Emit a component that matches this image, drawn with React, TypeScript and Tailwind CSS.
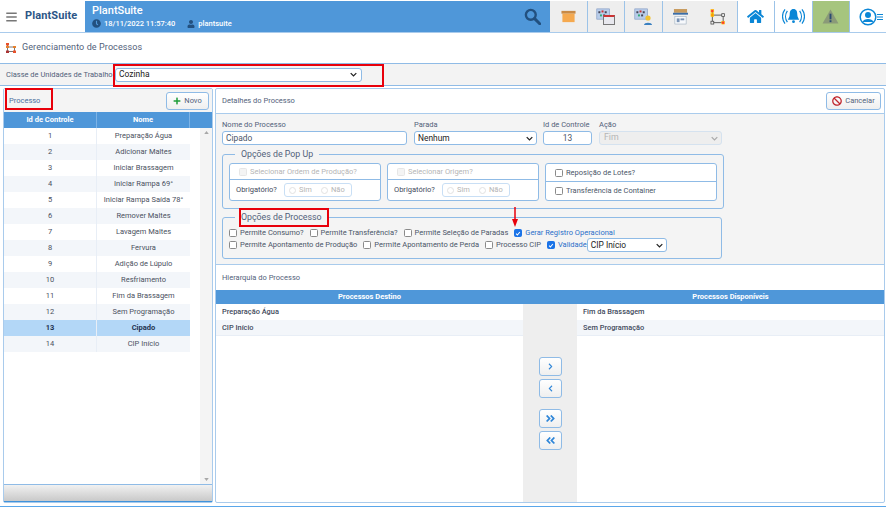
import React from "react";
import { FaHome, FaPlus, FaBan, FaChevronRight, FaChevronLeft, FaAngleDoubleRight, FaAngleDoubleLeft, FaBars, FaClock, FaUser } from "react-icons/fa";

const rows = ["Preparação Água","Adicionar Maltes","Iniciar Brassagem","Iniciar Rampa 69°","Iniciar Rampa Saída 78°","Remover Maltes","Lavagem Maltes","Fervura","Adição de Lúpulo","Resfriamento","Fim da Brassagem","Sem Programação","Cipado","CIP Início"];

const Chk = ({ on, dim }: { on?: boolean; dim?: boolean }) => (
  <span className={`inline-flex items-center justify-center w-[8px] h-[8px] rounded-[1.5px] border shrink-0 ${on ? "bg-[#1a73e8] border-[#1a73e8]" : dim ? "bg-[#f4f4f4] border-[#e6e6e6]" : "bg-white border-[#8a8a8a]"}`}>
    {on && <svg viewBox="0 0 8 8" className="w-[7px] h-[7px]"><path d="M1.5 4.2 3.2 6 6.5 2" fill="none" stroke="#fff" strokeWidth="1.4" /></svg>}
  </span>
);

const Caret = ({ c = "#222" }: { c?: string }) => (
  <svg viewBox="0 0 10 6" className="w-[7px] h-[5px] shrink-0"><path d="M1 1l4 4 4-4" fill="none" stroke={c} strokeWidth="1.8" /></svg>
);

const Sel = ({ w, text, cls = "" }: { w: string; text: string; cls?: string }) => (
  <div className={`${w} ${cls} h-[14px] bg-white border border-[#8fbbe6] rounded-[3px] flex items-center justify-between pl-[3px] pr-[3px] text-[8.4px] text-[#222]`}>
    <span>{text}</span><Caret />
  </div>
);

const Field = ({ w, label, children }: { w: string; label: string; children: React.ReactNode }) => (
  <div className={`${w} shrink-0 flex flex-col`}>
    <div className="h-[13px] text-[7.5px] leading-[13px] text-[#52617a] whitespace-nowrap">{label}</div>
    {children}
  </div>
);

const TopIcon = ({ children, bg = "bg-[#eeeeee]" }: { children: React.ReactNode; bg?: string }) => (
  <div className={`w-[37.5px] h-full ${bg} border-r border-[#9cc3e8] flex items-center justify-center shrink-0`}>{children}</div>
);

const Grid = () => (
  <svg viewBox="0 0 24 20" className="w-[19px] h-[16px]">
    <rect x="1" y="1" width="16" height="13" fill="#b9cdea" stroke="#7f98c0" strokeWidth=".8" />
    <rect x="3" y="4" width="2.5" height="2.5" fill="#445" /><rect x="7" y="3" width="2.5" height="2.5" fill="#c33" /><rect x="11" y="4" width="2.5" height="2.5" fill="#445" />
    <rect x="5" y="8" width="2.5" height="2.5" fill="#3a7" /><rect x="9" y="8" width="2.5" height="2.5" fill="#445" />
  </svg>
);

const PopBox = ({ label }: { label: string }) => (
  <div className="w-[152px] h-[38px] border border-[#8fbbe6] rounded-[3px] bg-white flex flex-col shrink-0">
    <div className="h-[16px] flex items-center pl-[9px] gap-[3px] border-b border-[#8fbbe6] text-[7.5px] text-[#b5b5b5]"><Chk dim /><span>{label}</span></div>
    <div className="flex-1 flex items-center pl-[6px] text-[7.5px] text-[#3f4a5c]">
      <span className="w-[48px]">Obrigatório?</span>
      <div className="w-[68px] h-[14px] border border-[#c9dff5] rounded-[3px] flex items-center pl-[4px] gap-[3px] text-[#b5b5b5]">
        <span className="w-[7px] h-[7px] rounded-full border border-[#e2e2e2]" /><span className="w-[19px]">Sim</span>
        <span className="w-[7px] h-[7px] rounded-full border border-[#e2e2e2]" /><span>Não</span>
      </div>
    </div>
  </div>
);

const Opt = ({ label, on, cls = "" }: { label: string; on?: boolean; cls?: string }) => (
  <label className={`flex items-center gap-[3px] text-[7.5px] whitespace-nowrap ${on ? "text-[#2a6fc9]" : "text-[#4a5568]"} ${cls}`}>
    <Chk on={on} /><span>{label}</span>
  </label>
);

const MoveBtn = ({ children, cls = "" }: { children: React.ReactNode; cls?: string }) => (
  <button className={`w-[23px] h-[19px] rounded-[3px] border border-[#8fbbe6] bg-gradient-to-b from-white to-[#efefef] flex items-center justify-center text-[#2f86d8] ${cls}`}>{children}</button>
);

export default function App() {
  return (
    <div className="relative w-[886px] h-[507px] overflow-hidden bg-white flex flex-col font-['Roboto',sans-serif]">
      {/* top bar */}
      <div className="h-[33px] pt-px flex border-b border-[#a9cbec] shrink-0">
        <div className="w-[85px] flex items-center pl-[6px] gap-[8px] shrink-0">
          <FaBars className="text-[#777] w-[11px] h-[12px]" />
          <span className="text-[11px] font-bold text-[#2c5687] tracking-[0.1px]">PlantSuite</span>
        </div>
        <div className="w-[465px] bg-[#4f97d9] flex items-center pl-[7px] pr-[9px] justify-between shrink-0">
          <div className="flex flex-col text-white">
            <span className="text-[11px] leading-[13px] font-medium">PlantSuite</span>
            <div className="flex items-center text-[7.5px] leading-[12px] mt-px font-medium">
              <FaClock className="w-[9px] h-[9px] text-[#22507f] mr-[3px]" />
              <span className="mr-[12px]">18/11/2022 11:57:40</span>
              <FaUser className="w-[8px] h-[8px] text-[#22507f] mr-[3px]" />
              <span>plantsuite</span>
            </div>
          </div>
          <svg viewBox="0 0 20 20" className="w-[17px] h-[17px]"><circle cx="8" cy="8" r="5.8" fill="none" stroke="#22507f" strokeWidth="2.8" /><path d="M12.5 12.5 18.5 18.5" stroke="#22507f" strokeWidth="3.4" strokeLinecap="round" /></svg>
        </div>
        <TopIcon>
          <svg viewBox="0 0 16 13" className="w-[15px] h-[13px]"><rect x="0.5" y="0.5" width="15" height="3" fill="#c98a45" /><rect x="1.5" y="3.5" width="13" height="9" fill="#f5a94f" /></svg>
        </TopIcon>
        <TopIcon>
          <div className="relative w-[19px] h-[17px]">
            <Grid />
            <div className="absolute right-0 bottom-0 w-[12px] h-[10px] bg-[#e8e8ee] border border-[#777] border-t-2 border-t-[#c33]" />
          </div>
        </TopIcon>
        <TopIcon>
          <div className="relative w-[19px] h-[17px]">
            <Grid />
            <svg viewBox="0 0 10 10" className="absolute right-0 bottom-0 w-[10px] h-[10px]"><circle cx="5" cy="3" r="2.6" fill="#f2c230" /><path d="M1 10c0-3 8-3 8 0z" fill="#3a80c0" /></svg>
          </div>
        </TopIcon>
        <div className="w-[75px] h-full bg-[#eeeeee] border-r border-[#9cc3e8] flex items-center shrink-0 pl-[10px] gap-[22px]">
          <svg viewBox="0 0 16 17" className="w-[15px] h-[16px] shrink-0"><rect x="1" y="0" width="14" height="4" fill="#c79a5c" /><rect x="0" y="4" width="16" height="2" fill="#3a6ea8" /><rect x="2" y="8" width="12" height="8" fill="#f7f9fc" stroke="#9ab" strokeWidth=".6" /><rect x="4" y="10" width="3" height="4" fill="#7a93b5" /><rect x="8" y="10" width="4" height="2" fill="#7a93b5" /></svg>
          <svg viewBox="0 0 17 17" className="w-[16px] h-[16px] shrink-0">
            <path d="M2.5 2 2.5 14.5 14 14.5 14 6.5 2.5 6.5" fill="none" stroke="#555" strokeWidth="1" />
            <rect x="1" y="0.5" width="3" height="3" fill="#f33" stroke="#fc0" strokeWidth=".6" /><rect x="1" y="5" width="3" height="3" fill="#f90" stroke="#fc0" strokeWidth=".6" /><rect x="12.5" y="5" width="3" height="3" fill="#eee" stroke="#444" strokeWidth=".8" /><rect x="1" y="13" width="3" height="3" fill="#eee" stroke="#444" strokeWidth=".8" /><rect x="12.5" y="13" width="3" height="3" fill="#f33" stroke="#fc0" strokeWidth=".6" />
          </svg>
        </div>
        <TopIcon bg="bg-white"><FaHome className="w-[17px] h-[15px] text-[#0a86d6]" /></TopIcon>
        <TopIcon bg="bg-white">
          <svg viewBox="0 0 24 18" className="w-[23px] h-[17px]" fill="none" stroke="#0a86d6" strokeWidth="1.3">
            <path d="M5.5 3C3 6.5 3 11.5 5.5 15M3 1.5C-.5 6 -.5 12 3 16.5M18.5 3C21 6.5 21 11.5 18.5 15M21 1.5C24.500 6 24.500 12 21 16.500" />
            <path d="M12 1c-3 0-4 2.500-4 5.500 0 3-1.500 4.500-2 6h12c-.5-1.500-2-3-2-6C16 3.500 15 1 12 1z" fill="#0a86d6" stroke="none" />
            <circle cx="12" cy="14.500" r="1.500" fill="#0a86d6" stroke="none" />
          </svg>
        </TopIcon>
        <TopIcon bg="bg-[#a6c57e]">
          <svg viewBox="0 0 18 16" className="w-[17px] h-[15px]"><path d="M9 0.500 17.500 15.500H.5z" fill="#8a9a78" /><rect x="8" y="5" width="2" height="6" fill="#2a4a72" /><rect x="8" y="12" width="2" height="2" fill="#2a4a72" /></svg>
        </TopIcon>
        <div className="flex-1 flex items-center pl-[9px]">
          <svg viewBox="0 0 24 18" className="w-[24px] h-[18px]"><circle cx="9" cy="9" r="7.800" fill="none" stroke="#0a86d6" strokeWidth="1.500" /><circle cx="9" cy="7" r="3" fill="#0a86d6" /><path d="M3.500 14c1-4 10-4 11 0z" fill="#0a86d6" /><path d="M18 6.500h6M18 9h6M18 11.500h6" stroke="#0a86d6" strokeWidth="1.200" /></svg>
        </div>
      </div>

      {/* title */}
      <div className="h-[31px] flex items-center pl-[6px] gap-[6px] border-b border-[#8fbbe6] shrink-0">
        <svg viewBox="0 0 10 10" className="w-[10px] h-[10px]"><path d="M1.500 1 1.500 8.500 8.500 8.500 8.500 4 1.500 4" fill="none" stroke="#555" strokeWidth=".8" /><rect x="0" y="0" width="3" height="2.500" fill="#e8502a" /><rect x="0" y="3" width="3" height="2" fill="#e8802a" /><rect x="7" y="3" width="3" height="2" fill="#e8802a" /><rect x="0" y="7.500" width="3" height="2.500" fill="#a33" /><rect x="7" y="7.500" width="3" height="2.500" fill="#e8502a" /></svg>
        <span className="text-[9px] text-[#52617a] tracking-[0.1px]">Gerenciamento de Processos</span>
      </div>

      {/* class bar */}
      <div className="h-[22px] bg-[#f3f3f3] border-b border-[#8fbbe6] flex items-center pl-[6px] shrink-0">
        <span className="w-[109px] text-[7.5px] text-[#52617a] whitespace-nowrap">Classe de Unidades de Trabalho</span>
        <div className="w-[247px] h-[14px] bg-white border border-[#8fbbe6] rounded-[3px] flex items-center justify-between pl-[3px] pr-[4px] text-[8.5px] text-[#222]">
          <span>Cozinha</span><Caret />
        </div>
      </div>

      {/* main */}
      <div className="flex-1 min-h-0 flex pl-[3px] pr-px pt-[2px] pb-[3px] gap-[3px] border-b border-[#5aa7ea]">
        {/* left panel */}
        <div className="w-[210px] flex flex-col border border-[#a9cbec] rounded-[2px] shrink-0">
          <div className="h-[23px] bg-[#f4f4f4] flex items-center justify-between pl-[5px] pr-[3px] shrink-0">
            <span className="text-[7.5px] text-[#4a6f9e]">Processo</span>
            <button className="w-[43px] h-[18px] rounded-[3px] border border-[#8fbbe6] bg-gradient-to-b from-white to-[#efefef] flex items-center justify-center gap-[3px] text-[7.5px] text-[#52617a]">
              <FaPlus className="w-[8px] h-[8px] text-[#1f9d3a]" />Novo
            </button>
          </div>
          <div className="h-[16px] bg-[#4f97d9] flex text-[7.5px] font-bold text-white shrink-0">
            <div className="w-[93px] flex items-center justify-center border-r border-[#7db3e6]">Id de Controle</div>
            <div className="w-[93px] flex items-center justify-center border-r border-[#7db3e6]">Nome</div>
          </div>
          <div className="flex-1 min-h-0 flex">
            <div className="w-[186px] shrink-0">
              {rows.map((r, i) => (
                <div key={r} className={`h-[16px] flex text-[7.5px] ${i === 12 ? "bg-[#b3d7f7] text-[#1f3350] font-bold" : i % 2 ? "bg-[#f3f6fa] text-[#4a5060]" : "bg-white text-[#4a5060]"}`}>
                  <div className="w-[93px] flex items-center justify-center border-r border-[#e8eef6]">{i + 1}</div>
                  <div className="w-[93px] flex items-center justify-center whitespace-nowrap">{r}</div>
                </div>
              ))}
            </div>
            <div className="flex-1" />
            <div className="w-[12px] bg-[#f4f4f4] flex flex-col items-center justify-between py-[3px] text-[#aaa]">
              <svg viewBox="0 0 6 4" className="w-[5px] h-[3px]"><path d="M3 0 6 4H0z" fill="#a8a8a8" /></svg>
              <svg viewBox="0 0 6 4" className="w-[5px] h-[3px]"><path d="M3 4 6 0H0z" fill="#a8a8a8" /></svg>
            </div>
          </div>
          <div className="h-[18px] bg-gradient-to-b from-[#f1f1f1] to-[#c9c9c9] border-t border-[#8fbbe6] border-b border-b-[#3f93dc] shrink-0" />
        </div>

        {/* right panel */}
        <div className="flex-1 min-w-0 flex flex-col border border-[#a9cbec] rounded-[2px] -ml-px">
          <div className="h-[25px] flex items-center justify-between pl-[6px] pr-[3px] border-b border-[#a9cbec] shrink-0">
            <span className="text-[7.5px] text-[#52617a]">Detalhes do Processo</span>
            <button className="w-[55px] h-[18px] rounded-[3px] border border-[#8fbbe6] bg-gradient-to-b from-white to-[#efefef] flex items-center justify-center gap-[3px] text-[7.5px] text-[#52617a]">
              <FaBan className="w-[10px] h-[10px] text-[#c0262d]" />Cancelar
            </button>
          </div>
          <div className="h-[151px] bg-[#f4f4f4] border-b border-[#a9cbec] pl-[6px] pt-[4px] shrink-0 flex flex-col">
            <div className="flex">
              <Field w="w-[185px] mr-[7px]" label="Nome do Processo">
                <div className="h-[14px] bg-white border border-[#8fbbe6] rounded-[3px] flex items-center pl-[3px] text-[8.4px] text-[#4a5568]">Cipado</div>
              </Field>
              <Field w="w-[123px] mr-[6px]" label="Parada"><Sel w="w-full" text="Nenhum" /></Field>
              <Field w="w-[49px] mr-[7px]" label="Id de Controle">
                <div className="h-[14px] bg-white border border-[#8fbbe6] rounded-[3px] flex items-center justify-center text-[8.4px] text-[#4a5568]">13</div>
              </Field>
              <Field w="w-[123px]" label="Ação">
                <div className="h-[14px] bg-[#eeeeee] border border-[#d5e2ef] rounded-[3px] flex items-center justify-between pl-[4px] pr-[3px] text-[8.8px] text-[#b5b5b5]">
                  <span>Fim</span><Caret c="#aaa" />
                </div>
              </Field>
            </div>
            <fieldset className="w-[500px] h-[61px] mt-[3px] border border-[#8fbbe6] rounded-[3px] px-[6px] flex shrink-0">
              <legend className="ml-[6px] px-[6px] text-[8.8px] leading-[12px] text-[#52617a]">Opções de Pop Up</legend>
              <div className="flex gap-[6px] pt-[3px]">
                <PopBox label="Selecionar Ordem de Produção?" />
                <PopBox label="Selecionar Origem?" />
                <div className="w-[172px] h-[38px] border border-[#8fbbe6] rounded-[3px] bg-white flex flex-col shrink-0 text-[7.5px] text-[#4a5568]">
                  <div className="h-[18px] flex items-center pl-[9px] gap-[3px] border-b border-[#8fbbe6]"><Chk /><span>Reposição de Lotes?</span></div>
                  <div className="flex-1 flex items-center pl-[9px] gap-[3px]"><Chk /><span>Transferência de Container</span></div>
                </div>
              </div>
            </fieldset>
            <fieldset className="w-[500px] h-[48px] mt-[2px] border border-[#8fbbe6] rounded-[3px] pl-[6px] pt-[4px] flex flex-col shrink-0">
              <legend className="ml-[6px] px-[6px] text-[8.8px] leading-[12px] text-[#52617a]">Opções de Processo</legend>
              <div className="h-[12px] flex items-center">
                <Opt label="Permite Consumo?" cls="mr-[6px]" />
                <Opt label="Permite Transferência?" cls="mr-[6px]" />
                <Opt label="Permite Seleção de Paradas" cls="mr-[6px]" />
                <Opt label="Gerar Registro Operacional" on />
              </div>
              <div className="h-[12px] flex items-center">
                <Opt label="Permite Apontamento de Produção" cls="mr-[6px]" />
                <Opt label="Permite Apontamento de Perda" cls="mr-[6px]" />
                <Opt label="Processo CIP" cls="mr-[6px]" />
                <Opt label="Validade" on />
                <Sel w="w-[80px]" text="CIP Início" />
              </div>
            </fieldset>
          </div>
          <div className="h-[25px] flex items-center pl-[6px] text-[7.5px] text-[#52617a] shrink-0">Hierarquia do Processo</div>
          <div className="h-[14px] bg-[#4f97d9] flex text-[7.5px] font-bold text-white shrink-0">
            <div className="w-[307px] flex items-center justify-center">Processos Destino</div>
            <div className="w-[54px]" />
            <div className="flex-1 flex items-center justify-center">Processos Disponíveis</div>
          </div>
          <div className="flex-1 min-h-0 flex">
            <div className="w-[307px] text-[7.4px] font-medium text-[#3f4a5c]">
              <div className="h-[16px] flex items-center pl-[6px] bg-white">Preparação Água</div>
              <div className="h-[16px] flex items-center pl-[6px] bg-[#f3f6fa] border-b border-[#e8eef6]">CIP Início</div>
            </div>
            <div className="w-[54px] bg-[#eeeeee] flex flex-col items-center pt-[53px]">
              <MoveBtn><FaChevronRight className="w-[7px] h-[7px]" /></MoveBtn>
              <MoveBtn cls="mt-[3px]"><FaChevronLeft className="w-[7px] h-[7px]" /></MoveBtn>
              <MoveBtn cls="mt-[11px]"><FaAngleDoubleRight className="w-[11px] h-[11px]" /></MoveBtn>
              <MoveBtn cls="mt-[3px]"><FaAngleDoubleLeft className="w-[11px] h-[11px]" /></MoveBtn>
            </div>
            <div className="flex-1 text-[7.4px] font-medium text-[#3f4a5c]">
              <div className="h-[16px] flex items-center pl-[6px] bg-white">Fim da Brassagem</div>
              <div className="h-[16px] flex items-center pl-[6px] bg-[#f3f6fa] border-b border-[#e8eef6]">Sem Programação</div>
            </div>
          </div>
        </div>
      </div>

      {/* red annotations */}
      <div className="absolute left-[113px] top-[64px] w-[271px] h-[23px] border-2 border-[#e8000b]" />
      <div className="absolute left-[5px] top-[88px] w-[48px] h-[22px] border-2 border-[#e8000b]" />
      <div className="absolute left-[239px] top-[208px] w-[90px] h-[19px] border-2 border-[#e8000b]" />
      <svg viewBox="0 0 8 20" className="absolute left-[511px] top-[207px] w-[8px] h-[20px]"><path d="M4 0V14" stroke="#e8000b" strokeWidth="1.500" /><path d="M1 12H7L4 20z" fill="#e8000b" /></svg>
    </div>
  );
}
